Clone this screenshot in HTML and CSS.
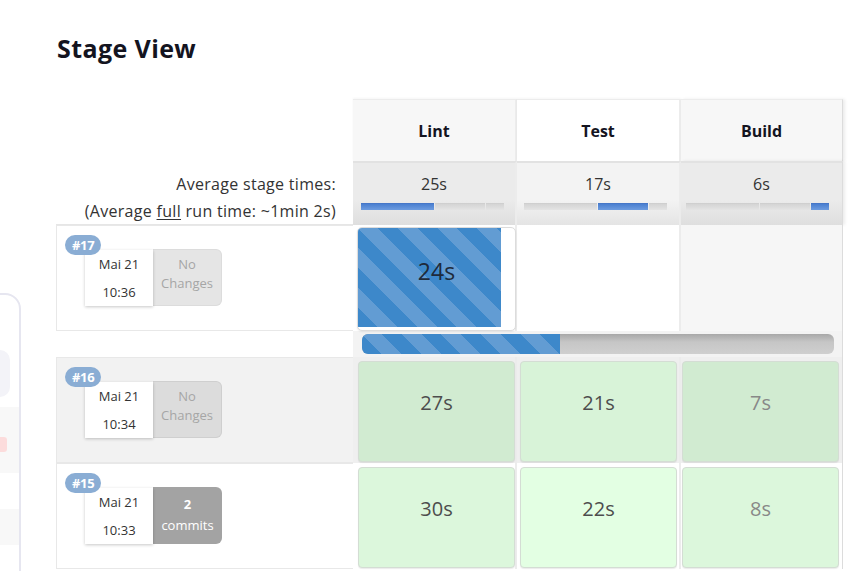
FILE: index.html
```html
<!DOCTYPE html>
<html lang="de">
<head>
<meta charset="utf-8">
<title>Stage View</title>
<link rel="stylesheet" href="styles.css">
</head>
<body>
<div class="side-card">
  <div class="side-pill"></div>
  <div class="side-row gray"><span class="side-badge"></span></div>
  <div class="side-row"></div>
  <div class="side-row gray"></div>
</div>
<main class="page">
  <h1 class="title">Stage View</h1>
  <div class="sv">
    <div class="row head">
      <div class="left"></div>
      <div class="stage odd">Lint</div>
      <div class="stage even">Test</div>
      <div class="stage odd last">Build</div>
    </div>
    <div class="row avg">
      <div class="left avg-label">
        <div>Average stage times:</div>
        <div>(Average <u>full</u> run time: ~1min 2s)</div>
      </div>
      <div class="stage odd col1">
        <div class="avg-time">25s</div>
        <div class="seg-bar"><span class="seg on" style="width:73px"></span><span class="seg" style="width:50px"></span><span class="seg" style="width:18px"></span></div>
      </div>
      <div class="stage even col2">
        <div class="avg-time">17s</div>
        <div class="seg-bar"><span class="seg" style="width:73px"></span><span class="seg on" style="width:50px"></span><span class="seg" style="width:18px"></span></div>
      </div>
      <div class="stage odd last col3">
        <div class="avg-time">6s</div>
        <div class="seg-bar"><span class="seg" style="width:73px"></span><span class="seg" style="width:50px"></span><span class="seg on" style="width:18px"></span></div>
      </div>
    </div>

    <div class="row build">
      <div class="left run-cell">
        <span class="badge">#17</span>
        <div class="meta">
          <div class="date"><div>Mai 21</div><div>10:36</div></div>
          <div class="changes none">No<br>Changes</div>
        </div>
      </div>
      <div class="cell-slot odd col1">
        <div class="running-box"><div class="running-fill" style="width:143px"></div><span class="running-text">24s</span></div>
      </div>
      <div class="cell-slot even col2"></div>
      <div class="cell-slot odd last plain col3"></div>
    </div>
    <div class="row progress">
      <div class="left blank"></div>
      <div class="progress-area"><div class="pbar"><div class="pfill" style="width:198px"></div></div></div>
    </div>

    <div class="row build alt">
      <div class="left run-cell">
        <span class="badge">#16</span>
        <div class="meta">
          <div class="date"><div>Mai 21</div><div>10:34</div></div>
          <div class="changes none">No<br>Changes</div>
        </div>
      </div>
      <div class="cell-slot odd col1"><div class="ok ok-a1">27s</div></div>
      <div class="cell-slot even col2"><div class="ok ok-a2">21s</div></div>
      <div class="cell-slot odd last col3"><div class="ok ok-a1 faded">7s</div></div>
    </div>

    <div class="row build">
      <div class="left run-cell">
        <span class="badge">#15</span>
        <div class="meta">
          <div class="date"><div>Mai 21</div><div>10:33</div></div>
          <div class="changes commits"><b>2</b><br>commits</div>
        </div>
      </div>
      <div class="cell-slot odd col1"><div class="ok ok-b1">30s</div></div>
      <div class="cell-slot even col2"><div class="ok ok-b2">22s</div></div>
      <div class="cell-slot odd last col3"><div class="ok ok-b1 faded">8s</div></div>
    </div>
  </div>
</main>
</body>
</html>
```

FILE: styles.css
```css
* { box-sizing: border-box; }
html, body { margin: 0; padding: 0; background: #fff; }
body {
  font-family: "Open Sans", "Noto Sans", "Liberation Sans", sans-serif;
  color: #333;
  width: 852px;
  height: 571px;
  overflow: hidden;
  position: relative;
}
.page { padding: 0 0 0 56px; }
.title {
  margin: 31px 0 0 1px;
  font-size: 25px;
  line-height: 34px;
  font-weight: 700;
  color: #14141f;
  letter-spacing: 0.4px;
}
.sv { margin-top: 34px; width: 789px; }
.row { display: flex; }
.left { width: 297px; flex: none; }
.stage, .cell-slot { width: 164px; flex: none; }
.stage.last, .cell-slot.last { width: 162px; }

/* header */
.head { height: 62px; }
.head .stage {
  display: flex; align-items: center; justify-content: center;
  font-weight: 700; font-size: 16px; color: #14141f;
  border-top: 1px solid #ececec;
  border-right: 2px solid #ececec;
  box-shadow: 0 -1px 2px rgba(0,0,0,0.04);
}
.head .stage.last { border-right: 1px solid #dcdcdc; box-shadow: 2px 0 3px rgba(0,0,0,0.08); }
.head .odd { background: #f7f7f7; }
.head .even { background: #fff; }

/* avg */
.avg { height: 64px; }
.avg-label {
  text-align: right;
  padding: 10px 17px 0 0;
  font-size: 16px;
  line-height: 27px;
  letter-spacing: 0.3px;
  color: #333;
  border-bottom: 1px solid #e6e6e6;
}
.avg-label u { text-underline-offset: 2px; }
.avg .stage {
  border-top: 2px solid #e2e2e2;
  border-right: 2px solid #ececec;
  padding-top: 9px;
  text-align: center;
}
.avg .stage.last { border-right: 1px solid #dcdcdc; box-shadow: 2px 0 3px rgba(0,0,0,0.08); }
.avg .odd { background: linear-gradient(#ebebeb 60%, #dedede); }
.avg .even { background: linear-gradient(#f3f3f3 60%, #e4e4e4); }
.avg-time { font-size: 16px; line-height: 24px; color: #333; }
.seg-bar {
  display: flex; gap: 1px;
  width: 143px; height: 7px;
  margin: 7px 0 0 8px;
}
.col2 .seg-bar { margin-left: 7px; }
.col3 .seg-bar { margin-left: 5px; }
.seg {
  display: block; height: 7px;
  background: linear-gradient(#d4d4d4, #e4e4e4);
  border-top: 1px solid #cfcfcf;
}
.seg.on { background: linear-gradient(#4a7fd0, #6d9ce0); border-top-color: #4677c8; }

/* build rows */
.build { height: 106px; }
.run-cell {
  position: relative;
  background: #fff;
  border-left: 1px solid #e8e8e8;
  border-bottom: 1px solid #e8e8e8;
  border-top: 1px solid #e8e8e8;
  padding: 24px 0 0 28px;
}
.alt .run-cell { background: #f2f2f2; }
.badge {
  position: absolute; left: 8px; top: 9px;
  background: #8aadd4; color: #fff;
  font-size: 13px; font-weight: 700;
  line-height: 20px; height: 20px;
  padding: 0 7px; border-radius: 10px;
  letter-spacing: -0.3px;
  z-index: 2;
}
.meta { display: flex; align-items: flex-start; }
.date {
  width: 68px; height: 56px;
  background: #fff;
  box-shadow: 0 1px 3px rgba(0,0,0,0.22);
  text-align: center;
  font-size: 13px; line-height: 28px; color: #333;
  position: relative; z-index: 1;
}
.changes {
  width: 69px; height: 57px;
  margin-top: -1px;
  border-radius: 0 6px 6px 0;
  text-align: center;
  font-size: 13px;
}
.changes.none { background: #e5e5e5; color: #a6a6a6; line-height: 19px; padding-top: 5px; border: 1px solid #dcdcdc; border-left: none; }
.alt .changes.none { background: #dcdcdc; border-color: #cfcfcf; }
.changes.commits { background: #a3a3a3; color: #fff; line-height: 21px; padding-top: 7px; }

.cell-slot {
  border-right: 2px solid #ececec;
  padding-top: 4px;
}
.cell-slot.col1 { padding-left: 5px; }
.cell-slot.col2 { padding-left: 3px; }
.cell-slot.col3 { padding-left: 1px; }
.cell-slot.last { border-right: 1px solid #dcdcdc; }
.build .cell-slot.even { background: #fff; }
.build .cell-slot.plain { background: #f6f6f6; }
.alt .cell-slot { background: #efefef !important; }

.running-box {
  position: relative;
  height: 104px;
  margin: -2px 0 0 -1px;
  width: 159px;
  border: 1px solid #dcdcdc;
  border-radius: 5px;
  background: #fff;
  overflow: hidden;
  box-shadow: 0 1px 2px rgba(0,0,0,0.08);
}
.running-fill {
  position: absolute; left: 0; top: 0; bottom: 3px;
  background: repeating-linear-gradient(45deg, #3d88ca 0 14px, #629cd3 14px 28px);
}
.running-text {
  position: relative;
  display: block; text-align: center;
  font-size: 23px; line-height: 30px; padding-top: 28px;
  color: #1e2a3a;
}

.ok {
  width: 157px;
  height: 101px;
  border: 1px solid #d4ddd4;
  border-radius: 4px;
  text-align: center;
  font-size: 20px; line-height: 28px;
  padding-top: 27px;
  color: #4d4d4d;
  box-shadow: 0 1px 1px rgba(0,0,0,0.08);
}
.ok-a1 { background: #d1ebd1; }
.ok-a2 { background: #d8f3d8; }
.ok-b1 { background: #dcf7dc; }
.ok-b2 { background: #e3ffe3; }
.faded { color: #888; }

.progress { height: 26px; }
.left.blank { background: #fff; }
.progress-area {
  width: 490px;
  background: #f3f3f3;
  border-right: 1px solid #dcdcdc;
  padding: 3px 8px 0 9px;
}
.pbar {
  height: 20px;
  border-radius: 6px;
  background: linear-gradient(#a8a8a8, #c6c6c6 40%, #cfcfcf);
  overflow: hidden;
}
.pfill {
  height: 100%;
  background: repeating-linear-gradient(45deg, #3d88ca 0 14px, #629cd3 14px 28px);
}

/* clipped sidebar card at the left edge */
.side-card {
  position: absolute;
  left: -40px; top: 293px;
  width: 61px; height: 300px;
  border: 2px solid #e6e6f0;
  border-radius: 0 16px 0 0;
  background: #fff;
  padding-top: 55px;
}
.side-pill {
  height: 47px; width: 48px;
  background: #f3f3f8;
  border-radius: 0 10px 10px 0;
}
.side-row { height: 36px; position: relative; }
.side-pill + .side-row { margin-top: 10px; height: 66px; }
.side-row.gray { background: #f8f8f8; }
.side-badge {
  position: absolute; right: 12px; top: 30px;
  width: 10px; height: 15px;
  background: #fcdcdc; border-radius: 3px;
}
```
